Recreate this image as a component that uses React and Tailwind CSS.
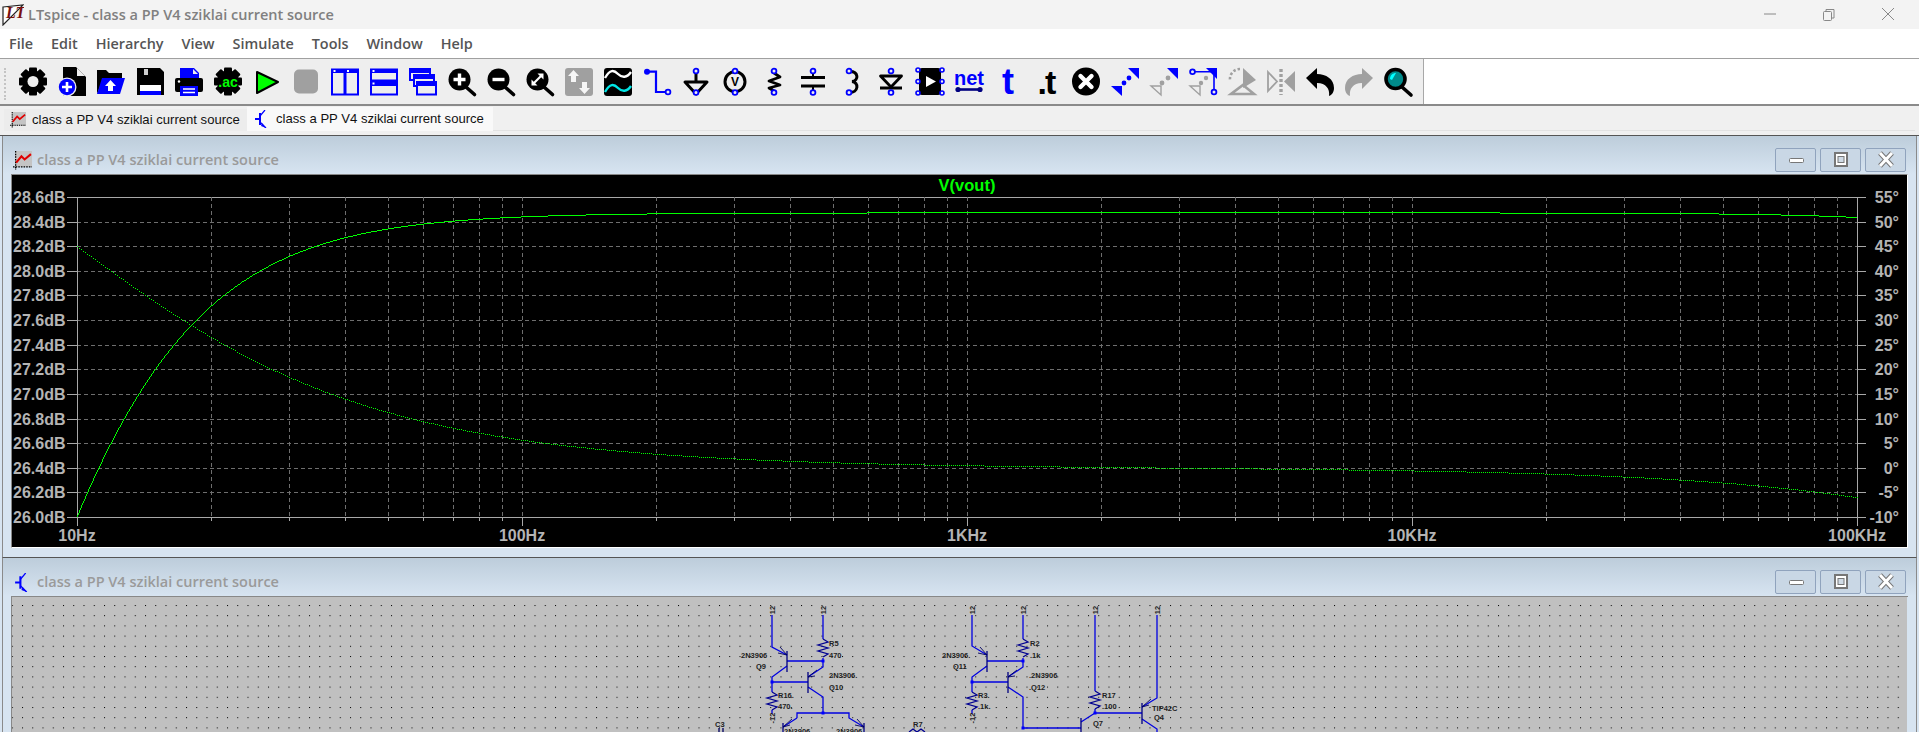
import React from 'react';

const TITLE = 'class a PP V4 sziklai current source';
const MENU = ['File', 'Edit', 'Hierarchy', 'View', 'Simulate', 'Tools', 'Window', 'Help'];

// plot geometry, in page pixels
const X0 = 77;
const DECADE = 445;
const TOP = 197;
const BOTTOM = 517;
const RIGHT = 1857;
const rowY = (i) => Math.round(TOP + (i * (BOTTOM - TOP)) / 13);
const fx = (f) => X0 + Math.log10(f / 10) * DECADE;

const DB = ['28.6dB', '28.4dB', '28.2dB', '28.0dB', '27.8dB', '27.6dB', '27.4dB', '27.2dB', '27.0dB', '26.8dB', '26.6dB', '26.4dB', '26.2dB', '26.0dB'];
const DEG = ['55°', '50°', '45°', '40°', '35°', '30°', '25°', '20°', '15°', '10°', '5°', '0°', '-5°', '-10°'];
const FREQ = [[10, '10Hz'], [100, '100Hz'], [1000, '1KHz'], [10000, '10KHz'], [100000, '100KHz']];

const minors = [];
for (let d = 10; d < 100000; d *= 10) {
  for (let m = 2; m < 10; m++) minors.push(Math.round(fx(d * m)));
}

const magPts = [];
let phaseDots = '';
for (let x = X0; x <= RIGHT; x++) {
  const f = 10 * Math.pow(10, (x - X0) / DECADE);
  const db = 28.475 - 10 * Math.log10(1 + (8.77 / f) ** 2) - 10 * Math.log10(1 + (f / 1070000) ** 2);
  const deg = (Math.atan(10 / f) - Math.atan(f / 950000)) * (180 / Math.PI);
  magPts.push(`${x},${Math.round(BOTTOM - ((db - 26) / 2.6) * 320)}`);
  if (x % 2 === 1) phaseDots += `M${x} ${Math.round(TOP + ((55 - deg) / 65) * 320) + 0.5}h1`;
}

const Blue = ({ x, y, r = 2.4 }) => <circle cx={x} cy={y} r={r} fill="#eeeeee" stroke="#0000ff" strokeWidth="1.8" />;
const Pins = ({ x = 14 }) => (
  <>
    <Blue x={x} y={4} />
    <Blue x={x} y={25.5} />
  </>
);

const Lens = ({ children }) => (
  <>
    <line x1="18" y1="20" x2="26.5" y2="27.5" stroke="#000" strokeWidth="3.6" strokeLinecap="round" />
    <circle cx="11.5" cy="12.5" r="11" fill="#000" />
    {children}
  </>
);

const Gear = () => (
  <>
    {[0, 45, 90, 135].map((a) => (
      <rect key={a} x="10" y="0.5" width="8" height="28" rx="1" fill="#000" transform={`rotate(${a} 14 14.5)`} />
    ))}
    <circle cx="14" cy="14.5" r="11" fill="#000" />
  </>
);

const ICONS = [
  <>
    <Gear />
    <circle cx="14" cy="14.5" r="5.5" fill="#eeeeee" />
  </>,
  <>
    <path d="M5 0H18L28 10V29H5Z" fill="#000" />
    <path d="M19 1L27 9H19Z" fill="#eeeeee" />
    <circle cx="9" cy="20" r="9.5" fill="#eeeeee" />
    <circle cx="9" cy="20" r="8.2" fill="#0000ff" />
    <path d="M9 15V25M4 20H14" stroke="#fff" strokeWidth="2.6" />
  </>,
  <>
    <path d="M0 3H9L12 6H25V12H6L0 27Z" fill="#000" />
    <path d="M5 11H28L23 27H0Z" fill="#0000ff" />
    <path d="M13.5 13L19 19H16V24H11V19H8Z" fill="#fff" />
  </>,
  <>
    <path d="M1 1H24L28 5V28H1Z" fill="#000" />
    <rect x="8" y="2" width="4" height="6" fill="#cfcfcf" />
    <rect x="4" y="18" width="21" height="7" fill="#fff" />
    <rect x="4" y="24" width="21" height="4" fill="#0000ff" />
  </>,
  <>
    <path d="M5 1H19L24 6V11H5Z" fill="#0000ff" />
    <path d="M18 2L23 7H18Z" fill="#eeeeee" />
    <rect x="0" y="11" width="28" height="14" rx="2" fill="#000" />
    <circle cx="4" cy="14.5" r="1.2" fill="#fff" />
    <rect x="5" y="19" width="18" height="10" fill="#0000ff" />
    <path d="M8 22H20M8 25.5H20" stroke="#fff" strokeWidth="1.4" />
  </>,
  <>
    <Gear />
    <text x="14" y="19.5" textAnchor="middle" fill="#00ff00" className="text-[14px] font-bold font-['Liberation_Sans',sans-serif]">.ac</text>
  </>,
  <path d="M4 5L25 15L4 26Z" fill="#00ff00" stroke="#000" strokeWidth="2" strokeLinejoin="round" />,
  <rect x="2" y="2.5" width="24" height="24" rx="5" fill="#a0a0a0" />,
  <>
    <path d="M1 2.5H13.5V27.5H1ZM14.5 2.5H27V27.5H14.5Z" fill="#fff0" stroke="#0000ff" strokeWidth="2" />
    <rect x="1" y="2" width="12.5" height="4" fill="#0000ff" />
    <rect x="14.5" y="2" width="12.5" height="4" fill="#0000ff" />
    <rect x="2.5" y="3" width="2" height="2" fill="#fff" />
    <rect x="16" y="3" width="2" height="2" fill="#fff" />
  </>,
  <>
    <path d="M1 2.5H27V13.5H1ZM1 15.5H27V27.5H1Z" fill="#fff0" stroke="#0000ff" strokeWidth="2" />
    <rect x="1" y="2" width="26" height="4" fill="#0000ff" />
    <rect x="1" y="14" width="26" height="5" fill="#0000ff" />
    <rect x="2.5" y="3" width="2" height="2" fill="#fff" />
    <rect x="2.5" y="15.5" width="2" height="2" fill="#fff" />
  </>,
  <>
    <rect x="1" y="2" width="20" height="11" fill="#eeeeee" stroke="#0000ff" strokeWidth="2" />
    <rect x="1" y="2" width="20" height="4" fill="#0000ff" />
    <rect x="5" y="8" width="20" height="11" fill="#eeeeee" stroke="#0000ff" strokeWidth="2" />
    <rect x="5" y="8" width="20" height="4" fill="#0000ff" />
    <rect x="8" y="15" width="19" height="12.5" fill="#eeeeee" stroke="#0000ff" strokeWidth="2" />
    <rect x="8" y="15" width="19" height="4" fill="#0000ff" />
  </>,
  <Lens>
    <path d="M11.5 6.5V18.5M5.5 12.5H17.5" stroke="#fff" strokeWidth="3.4" />
  </Lens>,
  <Lens>
    <path d="M5.5 12.5H17.5" stroke="#fff" strokeWidth="3.4" />
  </Lens>,
  <Lens>
    <path d="M8 16L15 9" stroke="#fff" strokeWidth="2.2" />
    <path d="M11.5 6.5H17.5V12.5ZM11.5 18.5H5.5V12.5Z" fill="#fff" />
  </Lens>,
  <>
    <rect x="0" y="1" width="28" height="28" rx="3" fill="#a0a0a0" />
    <path d="M8.5 3L14 9H11V15H6V9H3ZM19.5 27L14 21H17V15H22V21H25Z" fill="#fff" opacity="0.9" />
  </>,
  <>
    <rect x="0" y="1" width="28" height="28" rx="3" fill="#000" />
    <path d="M1 11C6 2 10 3 14 7C18 11 23 11 27 5" fill="none" stroke="#fff" strokeWidth="2.4" />
    <path d="M1 25C6 16 10 17 14 21C18 25 23 25 27 19" fill="none" stroke="#00e5e5" strokeWidth="2.4" />
  </>,
  <>
    <path d="M4 4.7H13V25H24" fill="none" stroke="#0000ff" strokeWidth="2.2" />
    <circle cx="4" cy="4.7" r="3" fill="#0000ff" />
    <Blue x={25} y={25} />
  </>,
  <>
    <path d="M14 5V14" stroke="#000" strokeWidth="3" />
    <path d="M3 15H25L14 27Z" fill="none" stroke="#000" strokeWidth="3" strokeLinejoin="round" />
    <Pins />
  </>,
  <>
    <circle cx="14" cy="14.7" r="10" fill="none" stroke="#000" strokeWidth="3" />
    <text x="14" y="19" textAnchor="middle" fill="#000" className="text-[12px] font-bold font-['Liberation_Sans',sans-serif]">V</text>
    <Pins />
  </>,
  <>
    <path d="M14 6L20 10L9 14L20 18L9 21L14 24" fill="none" stroke="#000" strokeWidth="2.8" strokeLinejoin="round" />
    <Pins />
  </>,
  <>
    <path d="M2 10.5H26" stroke="#000" strokeWidth="3" />
    <path d="M2 19H26" stroke="#000" strokeWidth="3" />
    <path d="M14 6V10M14 20V24" stroke="#000" strokeWidth="2" />
    <Pins />
  </>,
  <>
    <path d="M11 4.5C21 4 21 14 14 14.5C21 15 21 26 11 25.5" fill="none" stroke="#000" strokeWidth="3" />
    <Pins x={11} />
  </>,
  <>
    <path d="M3.5 9H24.5L14 20Z" fill="none" stroke="#000" strokeWidth="2.8" strokeLinejoin="round" />
    <path d="M3 21H25" stroke="#000" strokeWidth="3" />
    <Pins />
  </>,
  <>
    <rect x="3" y="1" width="22" height="27" rx="3" fill="#000" />
    <path d="M10 9L20 14.5L10 20Z" fill="#fff" />
    {[3, 14.5, 26].map((y) => (
      <React.Fragment key={y}>
        <circle cx="2" cy={y} r="2" fill="#eeeeee" stroke="#0000ff" strokeWidth="1.6" />
        <circle cx="26" cy={y} r="2" fill="#eeeeee" stroke="#0000ff" strokeWidth="1.6" />
      </React.Fragment>
    ))}
  </>,
  <>
    <text x="14" y="18" textAnchor="middle" fill="#0000ff" className="text-[20px] font-bold font-['Liberation_Sans',sans-serif]">net</text>
    <path d="M3 22.5H25" stroke="#000080" strokeWidth="2.6" />
    <circle cx="3" cy="22.5" r="2.6" fill="#000080" />
    <circle cx="25" cy="22.5" r="2.6" fill="#000080" />
  </>,
  <text x="14" y="27" textAnchor="middle" fill="#0000ff" className="text-[36px] font-bold font-['Liberation_Sans',sans-serif]">t</text>,
  <text x="13" y="27" textAnchor="middle" fill="#000" className="text-[34px] font-bold tracking-[-2px] font-['Liberation_Sans',sans-serif]">.t</text>,
  <>
    <circle cx="14" cy="14.5" r="14" fill="#000" />
    <path d="M8.5 9L19.5 20M19.5 9L8.5 20" stroke="#fff" strokeWidth="4.4" strokeLinecap="round" />
  </>,
  <>
    <path d="M17 1H28V12Z" fill="#0000ff" />
    <path d="M0 19H11V29Z" fill="#0000ff" />
    <circle cx="18" cy="11" r="2.4" fill="#0000ff" />
    <circle cx="13" cy="16" r="2.4" fill="#0000ff" />
  </>,
  <>
    <path d="M17 1H28V12Z" fill="#0000ff" />
    <path d="M1 19H11V28Z" fill="none" stroke="#a0a0a0" strokeWidth="1.4" />
    <circle cx="18" cy="11" r="2.4" fill="#a0a0a0" />
    <circle cx="12" cy="16" r="2.4" fill="#a0a0a0" />
  </>,
  <>
    <path d="M17 1H28V12Z" fill="#0000ff" />
    <path d="M4 4.7H25V25" fill="none" stroke="#0000ff" strokeWidth="1.6" />
    <Blue x={3.5} y={4.7} />
    <Blue x={25} y={25} />
    <path d="M1 19H11V28Z" fill="none" stroke="#a0a0a0" strokeWidth="1.4" />
    <circle cx="17" cy="11" r="2.2" fill="#a0a0a0" />
    <circle cx="12" cy="16" r="2.2" fill="#a0a0a0" />
  </>,
  <>
    <path d="M15 1L28 13L15 21Z" fill="#a0a0a0" />
    <path d="M12 2A10 10 0 0 0 2 13" fill="none" stroke="#a0a0a0" strokeWidth="2.6" strokeDasharray="2.5 2" />
    <path d="M15 18L26 27H3Z" fill="none" stroke="#a0a0a0" strokeWidth="2.6" />
  </>,
  <>
    <path d="M1 5L10 14.5L1 24Z" fill="none" stroke="#a0a0a0" strokeWidth="1.8" />
    <path d="M28 4V25L17 14.5Z" fill="#a0a0a0" />
    <path d="M14 2V28" stroke="#a0a0a0" strokeWidth="3.4" strokeDasharray="3 2" />
  </>,
  <path d="M0 11L11 1V7C20 7 28 12 28 21C28 25 26 28 23 29C24 22 20 16 11 16V22Z" fill="#000" />,
  <path d="M28 11L17 1V7C8 7 0 12 0 21C0 25 2 28 5 29C4 22 8 16 17 16V22Z" fill="#a0a0a0" />,
  <>
    <line x1="18" y1="20" x2="27" y2="28" stroke="#000" strokeWidth="3.6" strokeLinecap="round" />
    <circle cx="11.5" cy="12" r="9.5" fill="#008b8b" stroke="#000" strokeWidth="3.6" />
    <path d="M6 12C6 8 9 6 12 6L8 13Z" fill="#00ffff" />
  </>,
];

const Transistor = ({ w = 14, h = 18 }) => (
  <svg width={w} height={h} viewBox="0 0 14 18">
    <path d="M0 9H5M5 3V15" stroke="#0000ff" strokeWidth="2" />
    <path d="M5 6L10 0M5 12L11 18" stroke="#0000ff" strokeWidth="1.2" />
    <path d="M7 13L11 18L6 16Z" fill="#0000ff" />
  </svg>
);

const ChartIcon = ({ size = 18 }) => (
  <svg width={size} height={size} viewBox="0 0 18 18">
    <rect x="2" y="0" width="16" height="15" fill="#c4c4c4" />
    <path d="M2.5 0V18M0 15H18" stroke="#000" strokeWidth="1.2" strokeDasharray="1.5 1" />
    <path d="M3 11L8 5L11 8L17 3" fill="none" stroke="#e00000" strokeWidth="2" />
  </svg>
);

const WinBtn = ({ children }) => (
  <div className="w-[41px] h-[24px] rounded-[2px] border border-[#90a3bd] flex items-center justify-center bg-[#c9d7e5]">
    <svg width="18" height="18" viewBox="0 0 18 18">{children}</svg>
  </div>
);

function MdiTitle({ icon }) {
  return (
    <div className="flex items-center justify-between h-[38px] pl-[10px] pr-[10px] pt-[10px] bg-gradient-to-b from-[#bdcddb] to-[#d7e4f1]">
      <div className="flex items-center gap-[5px]">
        <div className="w-[19px] flex justify-center">{icon}</div>
        <span className="text-[14.5px] font-semibold leading-none text-[#9a9a9a] font-['Open_Sans',sans-serif]">{TITLE}</span>
      </div>
      <div className="flex gap-[4px]">
        <WinBtn>
          <rect x="2.5" y="7.5" width="14" height="4" rx="1" fill="#fff" stroke="#777" />
        </WinBtn>
        <WinBtn>
          <rect x="3" y="2" width="12" height="13" fill="#fff" stroke="#777" strokeWidth="2" />
          <rect x="6" y="5.5" width="6" height="6" fill="#d0dbe6" stroke="#777" />
        </WinBtn>
        <WinBtn>
          <path d="M3 2L15 15M15 2L3 15" stroke="#777" strokeWidth="5" />
          <path d="M3 2L15 15M15 2L3 15" stroke="#fff" strokeWidth="3" />
        </WinBtn>
      </div>
    </div>
  );
}

function Plot() {
  return (
    <svg width="1895" height="372" viewBox="12 175 1895 372" className="block bg-black">
      <g shapeRendering="crispEdges">
        {DB.map((_, i) =>
          i === 0 || i === 13 ? (
            <line key={i} x1="67" x2="1866" y1={rowY(i) + 0.5} y2={rowY(i) + 0.5} stroke="#a8a8a8" />
          ) : (
            <React.Fragment key={i}>
              <line x1={X0} x2={RIGHT} y1={rowY(i) + 0.5} y2={rowY(i) + 0.5} stroke="#6e6e6e" strokeDasharray="4 3" />
              <line x1="67" x2={X0} y1={rowY(i) + 0.5} y2={rowY(i) + 0.5} stroke="#a8a8a8" />
              <line x1={RIGHT} x2="1866" y1={rowY(i) + 0.5} y2={rowY(i) + 0.5} stroke="#a8a8a8" />
            </React.Fragment>
          ),
        )}
        {minors.map((x) => (
          <React.Fragment key={x}>
            <line x1={x + 0.5} x2={x + 0.5} y1={TOP} y2={BOTTOM} stroke="#6e6e6e" strokeDasharray="4 3" />
            <line x1={x + 0.5} x2={x + 0.5} y1={BOTTOM} y2={BOTTOM + 4} stroke="#a8a8a8" />
          </React.Fragment>
        ))}
        {FREQ.slice(1, 4).map(([f]) => (
          <React.Fragment key={f}>
            <line x1={Math.round(fx(f)) + 0.5} x2={Math.round(fx(f)) + 0.5} y1={TOP} y2={BOTTOM} stroke="#6e6e6e" strokeDasharray="4 3" />
            <line x1={Math.round(fx(f)) + 0.5} x2={Math.round(fx(f)) + 0.5} y1={BOTTOM} y2={BOTTOM + 9} stroke="#a8a8a8" />
          </React.Fragment>
        ))}
        <line x1={X0 + 0.5} x2={X0 + 0.5} y1={TOP} y2={BOTTOM + 9} stroke="#a8a8a8" />
        <line x1={RIGHT + 0.5} x2={RIGHT + 0.5} y1={TOP} y2={BOTTOM + 9} stroke="#a8a8a8" />
        <polyline points={magPts.join(' ')} fill="none" stroke="#00ff00" />
        <path d={phaseDots} fill="none" stroke="#00ff00" />
      </g>
      <g className="text-[16px] font-bold font-['Liberation_Sans',sans-serif]" fill="#b4b4b4">
        {DB.map((t, i) => (
          <text key={t} x="13" y={rowY(i) + 6}>{t}</text>
        ))}
        {DEG.map((t, i) => (
          <text key={t} x="1899" y={rowY(i) + 6} textAnchor="end">{t}</text>
        ))}
        {FREQ.map(([f, t]) => (
          <text key={t} x={fx(f)} y="541" textAnchor="middle">{t}</text>
        ))}
        <text x="967" y="191" textAnchor="middle" fill="#00ff00" className="text-[16.5px]">V(vout)</text>
      </g>
    </svg>
  );
}

const WIRES = [
  [772, 615, 772, 647, 787, 655],
  [787, 666, 772, 677, 772, 692],
  [772, 682, 808, 682],
  [787, 661, 823, 661],
  [823, 615, 823, 639],
  [823, 658, 823, 667, 808, 677],
  [808, 687, 823, 697, 823, 713],
  [797, 718, 797, 713, 849, 713, 849, 718, 864, 727],
  [797, 718, 783, 727],
  [972, 615, 972, 646, 987, 655],
  [987, 666, 972, 677, 972, 692],
  [972, 682, 1008, 682],
  [987, 661, 1023, 661],
  [1023, 615, 1023, 639],
  [1023, 658, 1023, 667, 1008, 677],
  [1008, 687, 1023, 697, 1023, 728],
  [1023, 728, 1081, 728],
  [1095, 615, 1095, 691],
  [1081, 722, 1095, 713],
  [1095, 709, 1095, 713, 1142, 713],
  [1157, 615, 1157, 698, 1142, 707],
  [1142, 719, 1157, 729, 1157, 732],
  [772, 710, 772, 714],
  [972, 710, 972, 714],
];
const BARS = [
  [787, 651, 672],
  [808, 672, 693],
  [987, 651, 672],
  [1008, 672, 693],
  [1081, 718, 733],
  [1142, 703, 724],
  [783, 723, 733],
  [864, 723, 733],
];
const RESISTORS = [
  [772, 692],
  [823, 639],
  [972, 692],
  [1023, 639],
  [1095, 691],
];
const DOTS = [[772, 682], [823, 661], [823, 713], [972, 682], [1023, 661], [1023, 728], [1095, 713]];
const ARROWS = [
  [779, 650, 787, 655],
  [816, 673, 808, 677],
  [979, 650, 987, 655],
  [1016, 673, 1008, 677],
  [1150, 702, 1142, 707],
  [791, 722, 783, 727],
  [856, 722, 864, 727],
];
const LABELS = [
  ['2N3906', 741, 658],
  ['Q9', 756, 669],
  ['R5', 829, 646],
  ['470', 829, 658],
  ['2N3906.', 829, 678],
  ['Q10', 829, 690],
  ['R16.', 778, 698],
  ['470.', 778, 709],
  ['C3', 715, 727],
  ['R7', 913, 727],
  ['2N3906', 784, 734],
  ['2N3906', 836, 734],
  ['2N3906.', 942, 658],
  ['Q11', 953, 669],
  ['R3.', 978, 698],
  ['.1k.', 978, 709],
  ['R2', 1030, 646],
  ['.1k', 1030, 658],
  ['.2N3906', 1029, 678],
  ['.Q12', 1029, 690],
  ['R17', 1102, 698],
  ['.100', 1102, 709],
  ['Q7', 1093, 726],
  ['TIP42C', 1152, 711],
  ['Q4', 1154, 720],
];
const RAILS = [
  ['12', 772],
  ['12', 823],
  ['-12', 772, 718],
  ['12', 972],
  ['12', 1023],
  ['-12', 972, 718],
  ['12', 1095],
  ['12', 1157],
];

function Schematic() {
  return (
    <svg width="1895" height="135" viewBox="12 597 1895 135" className="block bg-[#c0c0c0]">
      <defs>
        <pattern id="dots" x="22" y="605" width="10.25" height="10.2" patternUnits="userSpaceOnUse">
          <rect width="1" height="1" fill="#000" />
        </pattern>
      </defs>
      <rect x="12" y="597" width="1895" height="135" fill="url(#dots)" shapeRendering="crispEdges" />
      <g fill="none" stroke="#0000e0" strokeWidth="1.3">
        {WIRES.map((w) => (
          <polyline key={w.join()} points={w.join(' ')} />
        ))}
        {BARS.map(([x, a, b]) => (
          <line key={`${x}-${a}`} x1={x} x2={x} y1={a} y2={b} stroke="#000080" />
        ))}
        {RESISTORS.map(([x, y]) => (
          <polyline
            key={`${x}-${y}`}
            stroke="#000090"
            points={`${x},${y} ${x + 5},${y + 3} ${x - 5},${y + 6} ${x + 5},${y + 9} ${x - 5},${y + 12} ${x + 5},${y + 15} ${x},${y + 18}`}
          />
        ))}
        {ARROWS.map(([a, b, c, d]) => (
          <polyline key={`${a}-${b}`} points={`${a - 1},${b + 3} ${c},${d} ${a + 1},${b - 3}`} stroke="#000060" strokeWidth="0.9" />
        ))}
        <polyline points="909,732 913,729 917,732 921,729 925,732" stroke="#000090" />
        <path d="M719 728V732M723 728V732" stroke="#000060" />
      </g>
      {DOTS.map(([x, y]) => (
        <rect key={`${x}-${y}`} x={x - 1.5} y={y - 1.5} width="3" height="3" fill="#0000ff" />
      ))}
      <g fill="#222" className="text-[7.5px] font-bold font-['Liberation_Sans',sans-serif]">
        {LABELS.map(([t, x, y]) => (
          <text key={`${t}-${x}-${y}`} x={x} y={y}>{t}</text>
        ))}
        {RAILS.map(([t, x, y = 610]) => (
          <text key={`${t}-${x}`} x={x} y={y} textAnchor="middle" dominantBaseline="central" transform={`rotate(-90 ${x} ${y})`}>{t}</text>
        ))}
      </g>
    </svg>
  );
}

export default function App() {
  return (
    <div className="w-[1919px] h-[732px] overflow-hidden flex flex-col bg-white font-['Open_Sans',sans-serif]">
      {/* Window title */}
      <div className="h-[29px] flex items-center justify-between bg-[#f3f3f3] shrink-0">
        <div className="flex items-center">
          <svg width="22" height="23" viewBox="0 0 22 23" className="ml-[2px]">
            <path d="M1 4L21 2L1 22Z" fill="#fff" stroke="#222" strokeWidth="1.2" />
            <text x="4" y="15" fill="#7a1010" className="text-[16px] font-bold italic font-['Liberation_Serif',serif]">LT</text>
          </svg>
          <span className="ml-[4px] text-[14.5px] font-semibold text-[#808080]">LTspice - {TITLE}</span>
        </div>
        <div className="flex pr-[2px]">
          <div className="w-[59px] flex justify-center">
            <svg width="12" height="12" viewBox="0 0 12 12"><path d="M0 6H12" stroke="#888" /></svg>
          </div>
          <div className="w-[59px] flex justify-center">
            <svg width="12" height="14" viewBox="0 0 12 14">
              <rect x="0.5" y="3.5" width="8" height="9" rx="1" fill="none" stroke="#888" />
              <path d="M3 3V1.5H11V10H9" fill="none" stroke="#888" />
            </svg>
          </div>
          <div className="w-[59px] flex justify-center">
            <svg width="12" height="12" viewBox="0 0 12 12"><path d="M0 0L12 12M12 0L0 12" stroke="#888" /></svg>
          </div>
        </div>
      </div>

      {/* Menu */}
      <div className="h-[30px] flex items-center gap-[18px] pl-[9px] bg-white border-b border-[#a0a0a0] shrink-0">
        {MENU.map((m) => (
          <span key={m} className="text-[14.4px] font-semibold text-[#555]">{m}</span>
        ))}
      </div>

      {/* Toolbar */}
      <div className="h-[47px] flex bg-white border-b-2 border-[#8a8a8a] shrink-0">
        <div className="flex items-start bg-[#eeeeee] border-r border-[#a8a8a8] pr-[6px] pl-[4px]">
          <div className="mt-[9px] h-[32px] border-l-2 border-dotted border-[#c4c4c4]" />
          <div className="flex ml-[7px] pt-[8px]">
            {ICONS.map((icon, i) => (
              <div key={i} className="w-[39px] flex justify-center">
                <svg width="28" height="30" viewBox="0 0 28 30" className="overflow-visible">{icon}</svg>
              </div>
            ))}
          </div>
        </div>
      </div>

      {/* Tabs */}
      <div className="h-[29px] bg-[#f0f0f0] pl-[4px] shrink-0 relative">
        <div className="flex items-start pt-[1px] h-[25px] border-b border-[#e2e2e2] mr-[4px]">
          <div className="mt-[2px] h-[22px] w-[243px] flex items-center gap-[6px] pl-[6px] bg-[#ececec] text-[13.1px] text-[#111] font-['Liberation_Sans',sans-serif]">
            <ChartIcon size={16} />
            <span className="whitespace-nowrap">{TITLE}</span>
          </div>
          <div className="h-[24px] w-[246px] flex items-center gap-[7px] pl-[8px] bg-[#f9f9f9] text-[13.1px] text-[#111] font-['Liberation_Sans',sans-serif]">
            <Transistor />
            <span className="whitespace-nowrap">{TITLE}</span>
          </div>
        </div>
      </div>

      {/* MDI area */}
      <div className="flex-1 min-h-0 flex flex-col bg-[#d7e4f1] border-t border-[#555]">
        <div className="h-[421px] shrink-0 mx-[2px] border-l border-r border-[#8a8a8a]">
          <MdiTitle icon={<ChartIcon size={19} />} />
          <div className="mx-[8px] border-t border-l border-[#888] border-r border-b border-r-white border-b-white">
            <Plot />
          </div>
        </div>
        <div className="flex-1 min-h-0 mx-[2px] border-l border-r border-t border-[#8a8a8a] border-t-[#555] overflow-hidden">
          <MdiTitle icon={<Transistor w={15} h={19} />} />
          <div className="mx-[8px] border-t border-l border-[#888] border-r-white">
            <Schematic />
          </div>
        </div>
      </div>
    </div>
  );
}
